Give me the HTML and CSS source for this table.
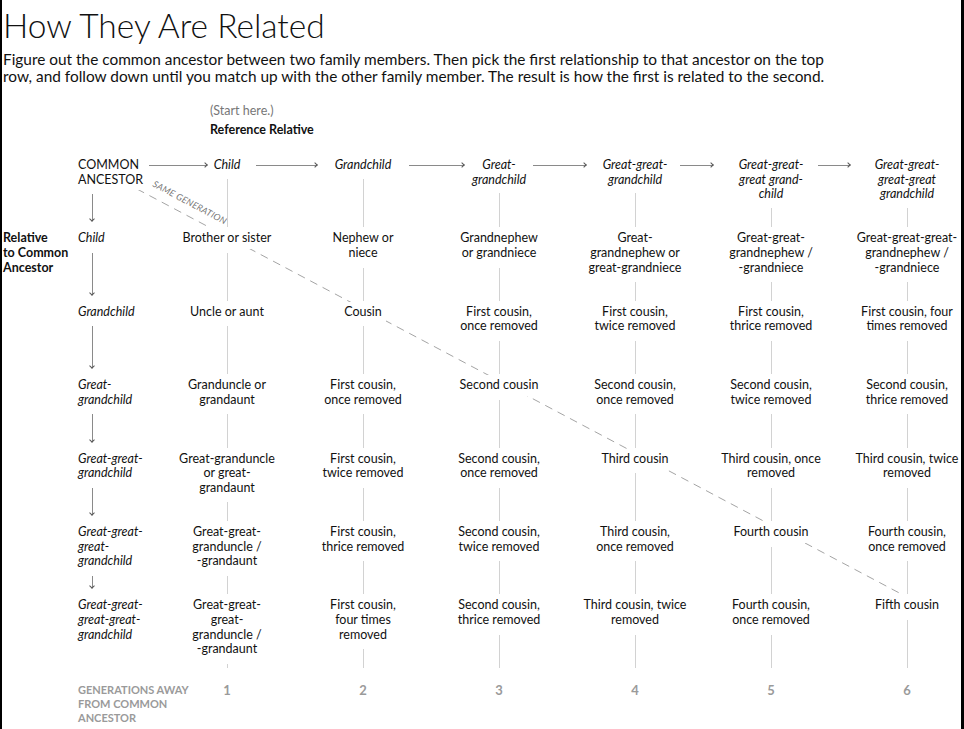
FILE: index.html
```html
<!DOCTYPE html>
<html lang="en">
<head>
<meta charset="utf-8">
<title>How They Are Related</title>
<link rel="stylesheet" href="styles.css">
</head>
<body>
<h1 class="title">How They Are Related</h1>
<p class="lead">Figure out the common ancestor between two family members. Then pick the first relationship to that ancestor on the top<br>row, and follow down until you match up with the other family member. The result is how the first is related to the second.</p>
<div class="intro">
  <div class="start">(Start here.)</div>
  <div class="ref">Reference Relative</div>
</div>

<div class="chart">
  <svg class="diag" width="960" height="540" viewBox="0 0 960 540">
    <line x1="134" y1="31" x2="902" y2="438" stroke="#9a9a9a" stroke-width="0.9" stroke-dasharray="8 6"/>
    <text x="149" y="28" transform="rotate(28 149 28)" class="same">SAME GENERATION</text>
  </svg>

  <!-- header row -->
  <div class="side"></div>
  <div class="lab"><span class="t up">COMMON<br>ANCESTOR</span><i class="va"></i></div>
  <div class="cell hd"><i class="ha a1"></i><span class="t">Child</span></div>
  <div class="cell hd"><i class="ha a2"></i><span class="t">Grandchild</span></div>
  <div class="cell hd"><i class="ha a3"></i><span class="t">Great-<br>grandchild</span></div>
  <div class="cell hd"><i class="ha a4"></i><span class="t">Great-great-<br>grandchild</span></div>
  <div class="cell hd"><i class="ha a5"></i><span class="t">Great-great-<br>great grand-<br>child</span></div>
  <div class="cell hd"><i class="ha a6"></i><span class="t">Great-great-<br>great-great<br>grandchild</span></div>

  <!-- row 1 -->
  <div class="side"><span class="rel">Relative<br>to Common<br>Ancestor</span></div>
  <div class="lab"><span class="t">Child</span><i class="va"></i></div>
  <div class="cell"><span class="t">Brother or sister</span></div>
  <div class="cell"><span class="t">Nephew or<br>niece</span></div>
  <div class="cell"><span class="t">Grandnephew<br>or grandniece</span></div>
  <div class="cell"><span class="t">Great-<br>grandnephew or<br>great-grandniece</span></div>
  <div class="cell"><span class="t">Great-great-<br>grandnephew /<br>-grandniece</span></div>
  <div class="cell"><span class="t">Great-great-great-<br>grandnephew /<br>-grandniece</span></div>

  <!-- row 2 -->
  <div class="side"></div>
  <div class="lab"><span class="t">Grandchild</span><i class="va"></i></div>
  <div class="cell"><span class="t">Uncle or aunt</span></div>
  <div class="cell"><span class="t">Cousin</span></div>
  <div class="cell"><span class="t">First cousin,<br>once removed</span></div>
  <div class="cell"><span class="t">First cousin,<br>twice removed</span></div>
  <div class="cell"><span class="t">First cousin,<br>thrice removed</span></div>
  <div class="cell"><span class="t">First cousin, four<br>times removed</span></div>

  <!-- row 3 -->
  <div class="side"></div>
  <div class="lab"><span class="t">Great-<br>grandchild</span><i class="va"></i></div>
  <div class="cell"><span class="t">Granduncle or<br>grandaunt</span></div>
  <div class="cell"><span class="t">First cousin,<br>once removed</span></div>
  <div class="cell"><span class="t">Second cousin</span></div>
  <div class="cell"><span class="t">Second cousin,<br>once removed</span></div>
  <div class="cell"><span class="t">Second cousin,<br>twice removed</span></div>
  <div class="cell"><span class="t">Second cousin,<br>thrice removed</span></div>

  <!-- row 4 -->
  <div class="side"></div>
  <div class="lab"><span class="t">Great-great-<br>grandchild</span><i class="va"></i></div>
  <div class="cell"><span class="t">Great-granduncle<br>or great-<br>grandaunt</span></div>
  <div class="cell"><span class="t">First cousin,<br>twice removed</span></div>
  <div class="cell"><span class="t">Second cousin,<br>once removed</span></div>
  <div class="cell"><span class="t">Third cousin</span></div>
  <div class="cell"><span class="t">Third cousin, once<br>removed</span></div>
  <div class="cell"><span class="t">Third cousin, twice<br>removed</span></div>

  <!-- row 5 -->
  <div class="side"></div>
  <div class="lab"><span class="t">Great-great-<br>great-<br>grandchild</span><i class="va"></i></div>
  <div class="cell"><span class="t">Great-great-<br>granduncle /<br>-grandaunt</span></div>
  <div class="cell"><span class="t">First cousin,<br>thrice removed</span></div>
  <div class="cell"><span class="t">Second cousin,<br>twice removed</span></div>
  <div class="cell"><span class="t">Third cousin,<br>once removed</span></div>
  <div class="cell"><span class="t">Fourth cousin</span></div>
  <div class="cell"><span class="t">Fourth cousin,<br>once removed</span></div>

  <!-- row 6 -->
  <div class="side"></div>
  <div class="lab"><span class="t">Great-great-<br>great-great-<br>grandchild</span></div>
  <div class="cell"><span class="t">Great-great-<br>great-<br>granduncle /<br>-grandaunt</span></div>
  <div class="cell"><span class="t">First cousin,<br>four times<br>removed</span></div>
  <div class="cell"><span class="t">Second cousin,<br>thrice removed</span></div>
  <div class="cell"><span class="t">Third cousin, twice<br>removed</span></div>
  <div class="cell"><span class="t">Fourth cousin,<br>once removed</span></div>
  <div class="cell"><span class="t">Fifth cousin</span></div>

  <!-- generations row -->
  <div class="side"></div>
  <div class="gen">GENERATIONS AWAY<br>FROM COMMON<br>ANCESTOR</div>
  <div class="num">1</div>
  <div class="num">2</div>
  <div class="num">3</div>
  <div class="num">4</div>
  <div class="num">5</div>
  <div class="num">6</div>
</div>
</body>
</html>
```

FILE: styles.css
```css
html {
  background: #000;
  overflow: hidden;
}

body {
  margin: 0 3px 0 2px;
  padding: 0 0 0 1px;
  background: #fff;
  min-height: 729px;
  overflow: hidden;
  font-family: "Lato", "Liberation Sans", sans-serif;
  color: #111;
  font-size: 12.5px;
}

.title {
  margin: 0;
  padding-top: 5px;
  font-size: 33.5px;
  line-height: 40px;
  font-weight: 300;
  color: #111;
}

.lead {
  margin: 6px 0 0;
  font-size: 15.4px;
  line-height: 17px;
  white-space: nowrap;
}

.intro {
  margin: 16px 0 0 207px;
  line-height: 19px;
}

.start {
  color: #777;
}

.ref {
  font-weight: 700;
}

.chart {
  position: relative;
  margin-top: 19px;
  display: grid;
  grid-template-columns: 75px 81px repeat(6, 136px);
  grid-template-rows: repeat(7, 73.4px) auto;
  line-height: 14.6px;
}

.diag {
  position: absolute;
  left: 0;
  top: 0;
  z-index: 0;
  overflow: visible;
}

.same {
  font-family: "Lato", "Liberation Sans", sans-serif;
  font-size: 9px;
  font-style: italic;
  fill: #777;
  letter-spacing: 0.3px;
}

.side,
.lab,
.cell,
.num,
.gen {
  position: relative;
  z-index: 1;
}

.rel {
  font-weight: 700;
  white-space: nowrap;
}

.t {
  background: #fff;
  padding: 3px 4px;
  margin-top: -3px;
  white-space: nowrap;
}

.lab {
  display: flex;
  flex-direction: column;
  align-items: flex-start;
  font-style: italic;
}

.lab .t {
  margin-left: -4px;
}

.lab .t.up {
  font-style: normal;
}

.va {
  position: relative;
  flex: 1;
  width: 1px;
  margin: 4px 0 10px 14px;
  background: #8a8a8a;
}

.va::after {
  content: "";
  position: absolute;
  left: -2px;
  bottom: 0;
  width: 3px;
  height: 3px;
  border-right: 1px solid #555;
  border-bottom: 1px solid #555;
  transform: rotate(45deg);
}

.cell {
  display: flex;
  flex-direction: column;
  align-items: center;
  text-align: center;
}

.cell::after {
  content: "";
  flex: 1;
  width: 1px;
  margin: 4px 0 4px;
  background: #d2d2d2;
}

.cell.hd {
  font-style: italic;
}

.cell.hd::after {
  margin-top: 3px;
}

.ha {
  position: absolute;
  top: 7px;
  height: 1px;
  background: #8a8a8a;
  right: calc(50% + var(--e));
  width: var(--w);
}

.ha::after {
  content: "";
  position: absolute;
  right: 0;
  top: -2px;
  width: 3px;
  height: 3px;
  border-top: 1px solid #555;
  border-right: 1px solid #555;
  transform: rotate(45deg);
}

.a1 { --e: 20px; --w: 58px; }
.a2 { --e: 46px; --w: 61px; }
.a3 { --e: 35px; --w: 55px; }
.a4 { --e: 49px; --w: 53px; }
.a5 { --e: 58px; --w: 33px; }
.a6 { --e: 57px; --w: 32px; }

.num {
  padding-top: 11px;
  text-align: center;
  font-weight: 700;
  color: #9a9a9a;
  font-size: 13px;
}

.gen {
  padding-top: 11px;
  font-weight: 700;
  color: #9a9a9a;
  font-size: 11px;
  line-height: 14px;
  white-space: nowrap;
}
```
